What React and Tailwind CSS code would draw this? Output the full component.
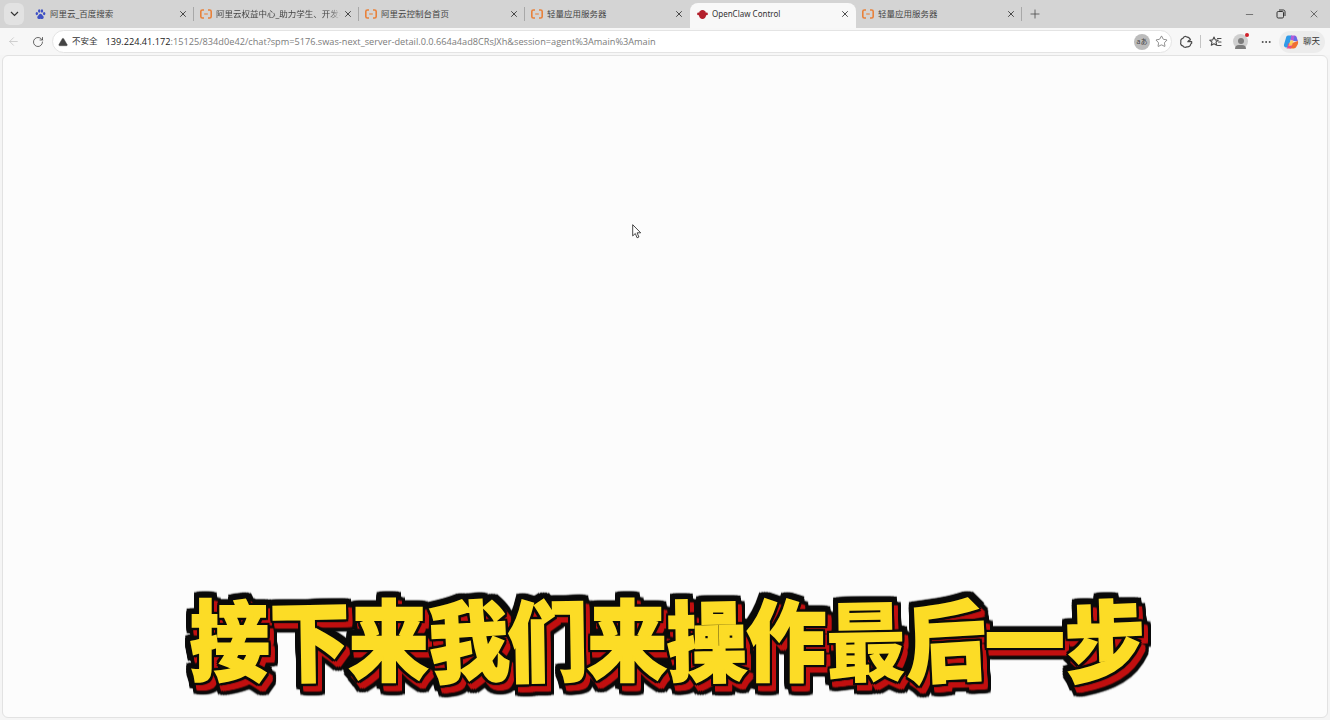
import React from 'react';
import { X, Plus, Minus, ArrowLeft, RotateCw, Star, Ellipsis, TriangleAlert } from 'lucide-react';

const uiFont = "font-['Noto_Sans','Noto_Sans_CJK_SC',sans-serif]";

const AliIcon = () => (
  <svg width="12" height="10" viewBox="0 0 12 10" fill="none" stroke="#e8813a" strokeWidth="1.6" className="shrink-0">
    <path d="M4 1H2.400C1.400 1 .8 1.600.8 2.600v4.800c0 1 .6 1.600 1.600 1.600H4" />
    <path d="M8 1h1.600c1 0 1.600.6 1.600 1.600v4.800c0 1-.6 1.600-1.600 1.600H8" />
    <path d="M4.200 5h3.600" strokeWidth="1.100" />
  </svg>
);

const BaiduIcon = () => (
  <svg width="11" height="11" viewBox="0 0 12 12" fill="#3d4fc4" className="shrink-0">
    <ellipse cx="2" cy="5" rx="1.300" ry="1.700" />
    <ellipse cx="4.600" cy="2.200" rx="1.300" ry="1.800" />
    <ellipse cx="7.600" cy="2.200" rx="1.300" ry="1.800" />
    <ellipse cx="10" cy="5" rx="1.300" ry="1.700" />
    <path d="M6 5.200c-1.400 0-1.700 1.500-2.900 2.400C2 8.500 2.300 11 4.300 11c.7 0 1.100-.3 1.700-.3s1 .3 1.700.3c2 0 2.300-2.500 1.200-3.400C7.700 6.700 7.400 5.200 6 5.200z" />
  </svg>
);

const ClawIcon = () => (
  <svg width="11" height="11" viewBox="0 0 12 12" fill="#b3202c" className="shrink-0">
    <ellipse cx="6" cy="6" rx="4" ry="5" />
    <circle cx="1.600" cy="5.400" r="1.500" />
    <circle cx="10.400" cy="5.400" r="1.500" />
  </svg>
);

const CopilotIcon = () => (
  <svg width="16" height="16" viewBox="0 0 16 16" className="shrink-0">
    <path d="M5 1.500h4L7 8 5 13.500H3.200C1.500 13.500.6 12 1 10.500l2-6.800C3.400 2.300 4 1.500 5 1.500z" fill="#2f9be8" />
    <path d="M8 1.500h3.500c1.200 0 2 .8 2.300 2L15 7.500l-4.500-.5-3-1z" fill="#b45ad6" />
    <path d="M15 7c.5 2.500-.5 4-1.500 5.500-.6 1.200-1.500 2-2.800 2H6.500L9 9z" fill="#f0702f" />
    <path d="M5 9.500h5l-1.200 3.200c-.3.800-1 1.800-2.300 1.800H3.200C5 14 4.500 11 5 9.500z" fill="#e54b8d" />
    <path d="M11.500 1.800c1 .3 1.800 1 2.100 2.300L14.500 7h-4z" fill="#5f6ee6" />
    <path d="M5.500 12l2-5.500h3L9 11.500z" fill="#ffd04a" opacity=".9" />
  </svg>
);

const ExtensionIcon = () => (
  <svg width="14" height="14" viewBox="0 0 14 14" fill="none" stroke="#4a4a4a" strokeWidth="1.200" strokeLinejoin="round">
    <path d="M7.500 1.800C6 1 4.300 1.800 4 3.400 2.300 3.600 1.300 5.300 1.900 7c-.8 1.600.1 3.500 1.900 3.800.7 1.500 2.800 2 4.200 1 1.800.4 3.500-.8 3.600-2.500 1-.5 1.400-1.600 1.100-2.600H8.800c.4-1 1.400-1.700 2.700-1.800C10.800 3 9.200 1.900 7.500 1.800z" />
  </svg>
);

const FavoritesIcon = () => (
  <svg width="14" height="14" viewBox="0 0 14 14" fill="none" stroke="#4a4a4a" strokeWidth="1.100" strokeLinejoin="round">
    <path d="M6 2l1.300 2.900 3 .3-2.300 2 .7 3L6 8.700 3.300 10.200l.7-3-2.300-2 3-.3z" />
    <path d="M9.500 3.500H13M10.500 7H13M9.500 10.500H13" strokeLinecap="round" />
  </svg>
);

const RestoreIcon = () => (
  <svg width="10" height="10" viewBox="0 0 10 10" fill="none" stroke="#333" strokeWidth="1">
    <rect x="1" y="2.500" width="6.500" height="6.500" rx="1.200" />
    <path d="M3 1h4.500C8.300 1 9 1.700 9 2.500V7" />
  </svg>
);

const Cursor = () => (
  <svg width="10" height="15" viewBox="0 0 10 15" className="absolute left-[632px] top-[224px]">
    <path d="M.7.700v11.200l2.600-2.400 1.800 4.300 1.800-.8L5.100 8.800h3.600z" fill="#fff" stroke="#333" strokeWidth=".9" strokeLinejoin="round" />
  </svg>
);

const tabs = [
  { title: '阿里云_百度搜索', icon: <BaiduIcon />, width: 'w-[166px]' },
  { title: '阿里云权益中心_助力学生、开发者', icon: <AliIcon />, width: 'w-[165px]', fade: true },
  { title: '阿里云控制台首页', icon: <AliIcon />, width: 'w-[166px]' },
  { title: '轻量应用服务器', icon: <AliIcon />, width: 'w-[165px]' },
  { title: 'OpenClaw Control', icon: <ClawIcon />, width: 'w-[166px]', active: true },
  { title: '轻量应用服务器', icon: <AliIcon />, width: 'w-[166px]' },
];

const Tab = ({ title, icon, width, active, fade }) => (
  <div className={`${width} h-[25px] flex items-center pl-[5px] pr-[5px] pb-[3px] shrink-0 ${active ? 'bg-[#f8f8f8] rounded-t-lg' : ''}`}>
    <div className="w-[14px] flex justify-center shrink-0">{icon}</div>
    <span
      className={`ml-[3px] flex-1 overflow-hidden whitespace-nowrap leading-[14px] ${active ? 'text-[8px] text-[#333]' : 'text-[8.5px] text-[#444]'} ${fade ? '[mask-image:linear-gradient(to_right,black_90%,transparent)]' : ''}`}
    >
      {title}
    </span>
    <X size={10} strokeWidth={1.900} className="text-[#222] shrink-0 ml-[2px] mr-[1px]" />
  </div>
);

const captionChars = [
  ['接', ''],
  ['下', '-rotate-1'],
  ['来', ''],
  ['我', '-rotate-[3deg]'],
  ['们', '-rotate-1'],
  ['来', ''],
  ['操', '-rotate-1'],
  ['作', ''],
  ['最', '-rotate-1 [-webkit-text-stroke:0]'],
  ['后', '-rotate-[3deg]'],
  ['一', ''],
  ['步', '-rotate-[2deg]'],
];

// black outline, then the red drop, then a black rim round the drop
const Caption = () => (
  <div className="absolute left-0 right-0 top-[597px] flex justify-center pl-[4px]">
    <div className="whitespace-nowrap text-[79.5px] leading-none font-black font-['Noto_Sans_CJK_SC',sans-serif] scale-y-[1.1] text-[#fcdc26] [-webkit-text-stroke:2px_#fcdc26] [filter:drop-shadow(2px_0_0_#0a0a0a)_drop-shadow(-2px_0_0_#0a0a0a)_drop-shadow(0_2px_0_#0a0a0a)_drop-shadow(0_-2px_0_#0a0a0a)_drop-shadow(4px_5px_0_#c10f0f)_drop-shadow(3px_0_0_#0a0a0a)_drop-shadow(-3px_0_0_#0a0a0a)_drop-shadow(0_3px_0_#0a0a0a)_drop-shadow(0_-3px_0_#0a0a0a)]">
      {captionChars.map(([ch, rot], i) => (
        <span key={i} className={`inline-block ${rot}`}>{ch}</span>
      ))}
    </div>
  </div>
);

export default function App() {
  return (
    <div className={`relative w-[1330px] h-[720px] overflow-hidden bg-[#f5f5f5] ${uiFont}`}>
      {/* tab strip */}
      <div className="h-[28px] bg-[#d4d4d4] flex items-end">
        <div className="w-[28px] h-[28px] flex items-center justify-center shrink-0">
          <div className="w-[20px] h-[22px] rounded-md bg-[#e2e2e2] flex items-center justify-center">
            <svg width="9" height="6" viewBox="0 0 9 6" fill="none" stroke="#333" strokeWidth="1.200"><path d="M1 1l3.500 3.500L8 1" /></svg>
          </div>
        </div>
        <div className="flex items-end h-[28px]">
          {tabs.map((tab, i) => (
            <div key={i} className="relative flex items-center h-[28px] pt-[3px]">
              <Tab {...tab} />
              {i < 3 && <div className="absolute right-0 top-[7px] w-px h-[14px] bg-[#a8a8a8]" />}
            </div>
          ))}
        </div>
        <div className="h-[28px] flex items-center -ml-[1px]">
          <div className="w-px h-[14px] bg-[#a8a8a8]" />
          <Plus size={14} strokeWidth={1.300} className="text-[#444] ml-[6px]" />
        </div>
        <div className="flex-1" />
        <div className="h-[28px] flex items-center text-[#333] pr-[10px]">
          <Minus size={11} strokeWidth={1.300} className="mr-[21px]" />
          <div className="mr-[22px]"><RestoreIcon /></div>
          <X size={12} strokeWidth={1.300} />
        </div>
      </div>

      {/* address bar */}
      <div className="h-[27px] bg-[#f7f7f7] flex items-center">
        <ArrowLeft size={13} strokeWidth={1.400} className="ml-[7px] text-[#c2c2c2] shrink-0" />
        <RotateCw size={12} strokeWidth={1.600} className="ml-[12px] text-[#444] shrink-0" />
        <div className="ml-[8px] w-[1120px] h-[23px] rounded-full bg-white border border-[#e4e4e4] flex items-center shrink-0">
          <TriangleAlert size={10} fill="#444" strokeWidth={1} className="ml-[5px] text-[#444] shrink-0" />
          <span className="ml-[4px] text-[8.5px] text-[#333] leading-none">不安全</span>
          <span className="ml-[8px] text-[9.2px] leading-none whitespace-nowrap text-[#7b7b7b] font-['Open_Sans',sans-serif]">
            <span className="text-[#222]">139.224.41.172</span>:15125/834d0e42/chat?spm=5176.swas-next_server-detail.0.0.664a4ad8CRsJXh&session=agent%3Amain%3Amain
          </span>
          <div className="flex-1" />
          <div className="w-[16px] h-[16px] rounded-full bg-[#bcbcbc] flex items-center justify-center text-[7px] text-[#444] leading-none">aあ</div>
          <Star size={13} strokeWidth={1.100} className="ml-[5px] mr-[3px] text-[#444]" />
        </div>
        <div className="ml-[7px]"><ExtensionIcon /></div>
        <div className="ml-[7px] w-px h-[13px] bg-[#c4c4c4]" />
        <div className="ml-[7px]"><FavoritesIcon /></div>
        <div className="relative ml-[11px] w-[15px] h-[15px] rounded-full bg-[#cfcfcf] flex flex-col items-center justify-end">
          <div className="w-[6px] h-[6px] rounded-full bg-[#7d7d7d] mb-[1px]" />
          <div className="w-[11px] h-[4px] rounded-t-full bg-[#7d7d7d]" />
          <div className="absolute -top-[1px] -right-[1px] w-[4px] h-[4px] rounded-full bg-[#d0202a]" />
        </div>
        <Ellipsis size={12} strokeWidth={2} className="ml-[12px] text-[#444]" />
        <div className="ml-[7px] h-[22px] w-[46px] rounded-full bg-[#ececec] flex items-center pl-[4px]">
          <CopilotIcon />
          <span className="ml-[4px] text-[8.5px] text-[#333] leading-none">聊天</span>
        </div>
      </div>

      {/* page */}
      <div className="mx-[2px] h-[663px] bg-[#fcfcfc] border border-[#e2e2e2] rounded-md" />

      <Cursor />
      <Caption />
    </div>
  );
}
